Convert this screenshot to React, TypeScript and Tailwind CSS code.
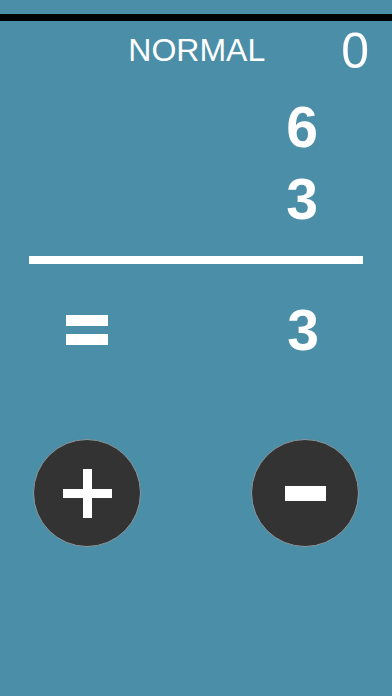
import React from "react";

export default function App() {
  return (
    <div
      className="w-[392px] h-[696px] bg-[#4b8ea8] overflow-hidden flex flex-col text-white"
      style={{ fontFamily: '"Liberation Sans", Arial, sans-serif' }}
    >
      <div className="h-[14px]" />
      <div className="h-[7px] bg-black" />
      <div className="h-[70px] flex justify-end items-start pr-[23px] gap-[76px]">
        <span className="mt-[13px] text-[32px] leading-[32px]">NORMAL</span>
        <span className="mt-[5px] text-[50px] leading-[50px]">0</span>
      </div>
      <div className="ml-[286px] w-[32px] flex flex-col items-center font-bold text-[57px] leading-[72px]">
        <span>6</span>
        <span>3</span>
      </div>
      <div className="mt-[21px] mx-[29px] h-[8px] bg-white" />
      <div className="mt-[30px] h-[72px] flex items-center">
        <div className="ml-[66px] w-[42px] flex flex-col gap-[8px]">
          <div className="h-[11px] bg-white" />
          <div className="h-[11px] bg-white" />
        </div>
        <span className="ml-[179px] w-[32px] text-center font-bold text-[57px] leading-[72px]">3</span>
      </div>
      <div className="mt-[73px] flex pl-[33px] gap-[110px]">
        <button className="w-[108px] h-[108px] rounded-full bg-[#333333] border border-[#8c9a9f] flex items-center justify-center">
          <svg width="49" height="49" viewBox="0 0 49 49">
            <rect x="0" y="20" width="49" height="9" fill="#fff" />
            <rect x="20" y="0" width="9" height="49" fill="#fff" />
          </svg>
        </button>
        <button className="w-[108px] h-[108px] rounded-full bg-[#333333] border border-[#8c9a9f] flex items-center justify-center">
          <svg width="41" height="15" viewBox="0 0 41 15">
            <rect x="0" y="0" width="41" height="15" fill="#fff" />
          </svg>
        </button>
      </div>
    </div>
  );
}
